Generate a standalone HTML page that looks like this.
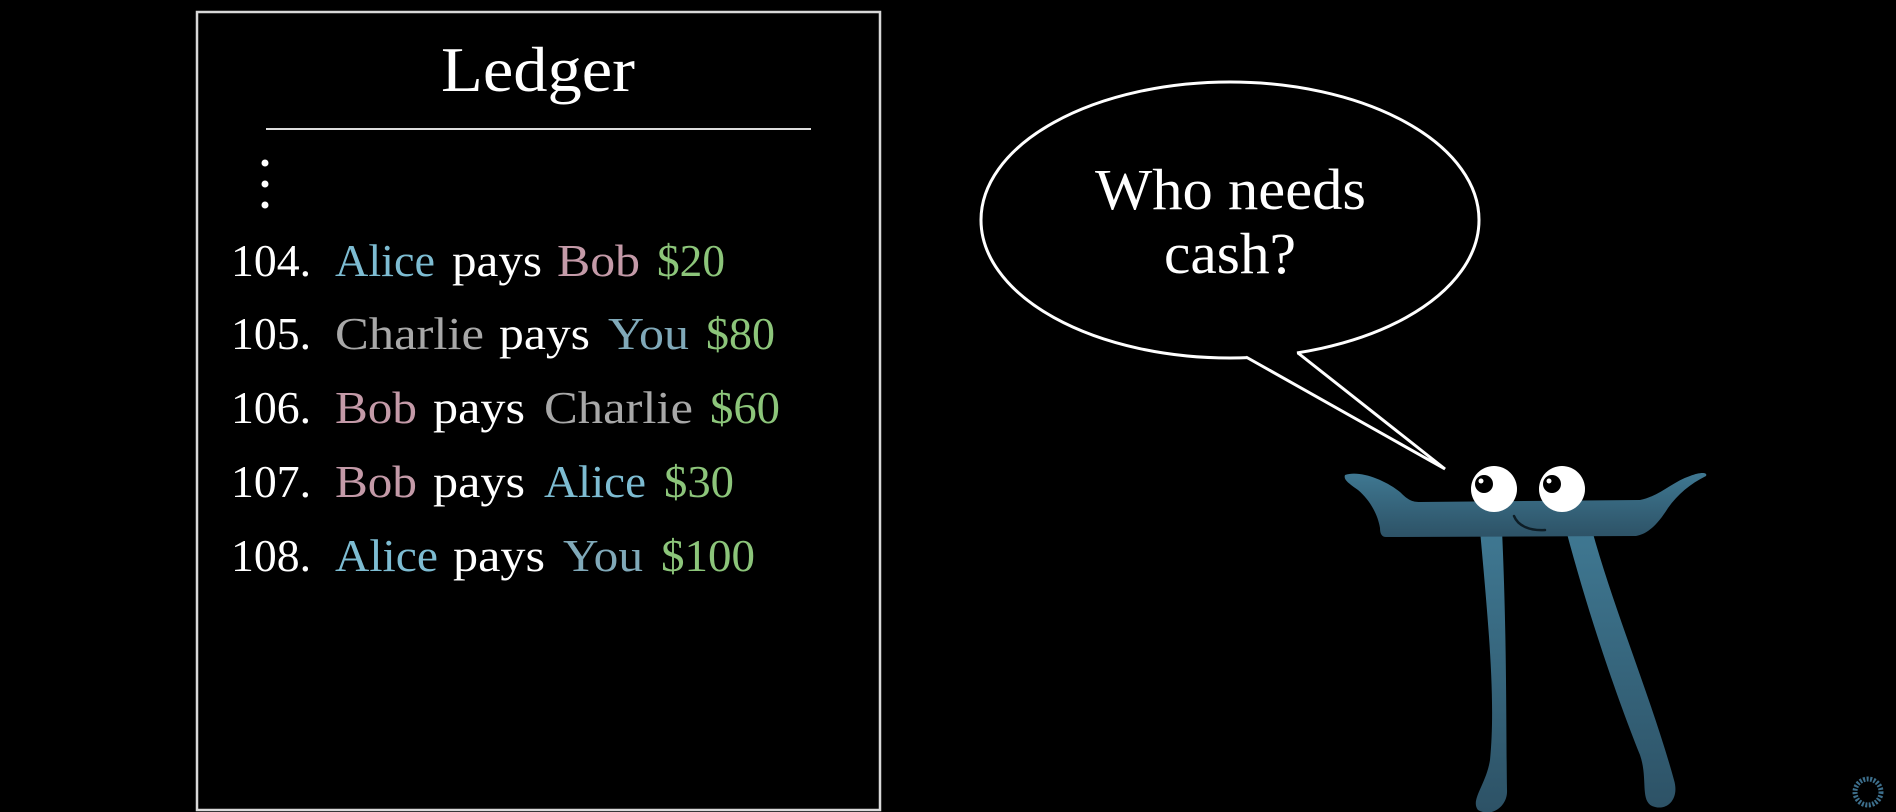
<!DOCTYPE html>
<html><head><meta charset="utf-8"><style>
html,body{margin:0;padding:0;background:#000;width:1896px;height:812px;overflow:hidden}
svg{display:block}
text{font-family:"Liberation Serif",serif}
</style></head><body>
<svg width="1896" height="812" viewBox="0 0 1896 812" xmlns="http://www.w3.org/2000/svg">
<defs>
<linearGradient id="pg" x1="0" y1="0" x2="0" y2="1">
<stop offset="0" stop-color="#3f7892"/><stop offset="1" stop-color="#2d5266"/>
</linearGradient>
</defs>
<rect width="1896" height="812" fill="#000"/>
<rect x="197" y="12" width="683" height="798" fill="none" stroke="#d8d8d8" stroke-width="2.5"/>
<text x="441" y="91" font-size="64" fill="#fff" textLength="194" lengthAdjust="spacingAndGlyphs">Ledger</text>
<line x1="266" y1="129" x2="811" y2="129" stroke="#ddd" stroke-width="2"/>
<circle cx="265" cy="163" r="3.5" fill="#fff"/><circle cx="265" cy="184" r="3.5" fill="#fff"/><circle cx="265" cy="205" r="3.5" fill="#fff"/>
<g font-size="46">
<text x="231" y="276" fill="#fff" textLength="80" lengthAdjust="spacingAndGlyphs">104.</text>
<text x="335" y="276" fill="#7dbcd2" textLength="100" lengthAdjust="spacingAndGlyphs">Alice</text>
<text x="452" y="276" fill="#fff" textLength="90" lengthAdjust="spacingAndGlyphs">pays</text>
<text x="557" y="276" fill="#c49aa8" textLength="83" lengthAdjust="spacingAndGlyphs">Bob</text>
<text x="657" y="276" fill="#8cc57a" textLength="68" lengthAdjust="spacingAndGlyphs">$20</text>

<text x="231" y="349" fill="#fff" textLength="80" lengthAdjust="spacingAndGlyphs">105.</text>
<text x="335" y="349" fill="#a8a8a8" textLength="149" lengthAdjust="spacingAndGlyphs">Charlie</text>
<text x="499" y="349" fill="#fff" textLength="91" lengthAdjust="spacingAndGlyphs">pays</text>
<text x="608" y="349" fill="#80a9b9" textLength="81" lengthAdjust="spacingAndGlyphs">You</text>
<text x="706" y="349" fill="#8cc57a" textLength="69" lengthAdjust="spacingAndGlyphs">$80</text>

<text x="231" y="423" fill="#fff" textLength="80" lengthAdjust="spacingAndGlyphs">106.</text>
<text x="335" y="423" fill="#c49aa8" textLength="82" lengthAdjust="spacingAndGlyphs">Bob</text>
<text x="433" y="423" fill="#fff" textLength="92" lengthAdjust="spacingAndGlyphs">pays</text>
<text x="544" y="423" fill="#a8a8a8" textLength="149" lengthAdjust="spacingAndGlyphs">Charlie</text>
<text x="710" y="423" fill="#8cc57a" textLength="70" lengthAdjust="spacingAndGlyphs">$60</text>

<text x="231" y="497" fill="#fff" textLength="80" lengthAdjust="spacingAndGlyphs">107.</text>
<text x="335" y="497" fill="#c49aa8" textLength="82" lengthAdjust="spacingAndGlyphs">Bob</text>
<text x="433" y="497" fill="#fff" textLength="92" lengthAdjust="spacingAndGlyphs">pays</text>
<text x="544" y="497" fill="#7dbcd2" textLength="102" lengthAdjust="spacingAndGlyphs">Alice</text>
<text x="664" y="497" fill="#8cc57a" textLength="70" lengthAdjust="spacingAndGlyphs">$30</text>

<text x="231" y="571" fill="#fff" textLength="80" lengthAdjust="spacingAndGlyphs">108.</text>
<text x="335" y="571" fill="#7dbcd2" textLength="103" lengthAdjust="spacingAndGlyphs">Alice</text>
<text x="453" y="571" fill="#fff" textLength="92" lengthAdjust="spacingAndGlyphs">pays</text>
<text x="563" y="571" fill="#80a9b9" textLength="80" lengthAdjust="spacingAndGlyphs">You</text>
<text x="661" y="571" fill="#8cc57a" textLength="94" lengthAdjust="spacingAndGlyphs">$100</text>
</g>

<!-- speech bubble -->
<ellipse cx="1230" cy="220" rx="249" ry="138" fill="none" stroke="#fff" stroke-width="3"/>
<polygon points="1247,348 1296,344 1298,364 1247,366" fill="#000"/>
<polyline points="1246,357 1445,469 1298,353" fill="none" stroke="#fff" stroke-width="3" stroke-linejoin="miter"/>
<text x="1095" y="209" font-size="58" fill="#fff" textLength="271" lengthAdjust="spacingAndGlyphs">Who needs</text>
<text x="1164" y="273" font-size="58" fill="#fff" textLength="132" lengthAdjust="spacingAndGlyphs">cash?</text>

<!-- pi creature -->
<path d="M1480,530 C1488,620 1496,700 1490,760 C1486,785 1470,800 1478,810 C1492,818 1508,806 1507,790 C1506,730 1507,640 1502,530 Z" fill="url(#pg)"/>
<path d="M1566,530 C1590,620 1618,700 1640,755 C1648,778 1640,800 1652,806 C1666,812 1680,800 1674,780 C1652,700 1614,610 1592,530 Z" fill="url(#pg)"/>
<path d="M1345,475 C1360,470 1385,480 1400,492 C1408,500 1412,502 1420,502 L1640,500 C1660,496 1672,482 1690,476 C1700,472 1708,472 1706,476 C1690,484 1678,494 1668,508 C1658,524 1648,534 1636,536 L1386,537 C1382,537 1380,534 1380,528 C1378,515 1370,500 1358,490 C1350,484 1343,480 1345,475 Z" fill="url(#pg)"/>
<circle cx="1494" cy="489" r="23" fill="#fff"/>
<circle cx="1562" cy="489" r="23" fill="#fff"/>
<circle cx="1484" cy="484" r="9" fill="#000"/><circle cx="1481" cy="481" r="2.5" fill="#fff"/>
<circle cx="1552" cy="484" r="9" fill="#000"/><circle cx="1549" cy="481" r="2.5" fill="#fff"/>
<path d="M1514,516 C1518,526 1530,531 1545,530" fill="none" stroke="#0d1d26" stroke-width="2.5" stroke-linecap="round"/>

<!-- spinner -->
<circle cx="1868" cy="792" r="13" fill="none" stroke="#3d6f8c" stroke-width="5" stroke-dasharray="2 1.5"/>
</svg>
</body></html>
